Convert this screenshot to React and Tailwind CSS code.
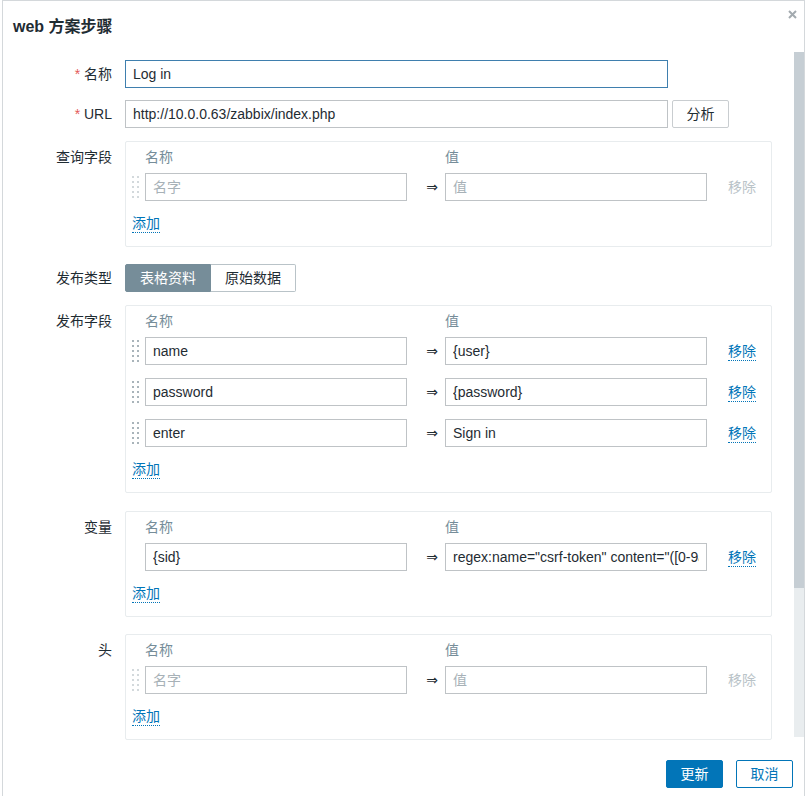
import React from "react";

function Handle({ light }) {
  const fill = light ? "#d3d9dc" : "#a9b4ba";
  const dots = [];
  for (let r = 0; r < 5; r++) {
    for (let c = 0; c < 2; c++) {
      dots.push(<rect key={r + "-" + c} x={c * 5} y={r * 5} width="2" height="2" fill={fill} />);
    }
  }
  return (
    <svg width="7" height="22" viewBox="0 0 7 22" className="shrink-0">
      {dots}
    </svg>
  );
}

function Field({ value, placeholder, focus }) {
  return (
    <input
      readOnly
      value={value || ""}
      placeholder={placeholder}
      className={
        "h-[28px] w-[262px] shrink-0 border bg-white px-[7px] text-[14px] text-[#1f2c33] outline-none placeholder:text-[#a7b1b7] " +
        (focus ? "border-[#3f7fae]" : "border-[#bfc3c6]")
      }
    />
  );
}

function PairRow({ name, value, namePh, valuePh, handle, light, removable }) {
  return (
    <div className="flex h-[28px] items-center">
      <div className="flex w-[13px] shrink-0 items-center">{handle ? <Handle light={light} /> : null}</div>
      <Field value={name} placeholder={namePh} />
      <div className="w-[38px] shrink-0 pr-[7px] text-right text-[14px] text-[#1f2c33] font-['DejaVu_Sans',sans-serif]">⇒</div>
      <Field value={value} placeholder={valuePh} />
      <span
        className={
          "ml-[21px] text-[14px] leading-[18px] " +
          (removable ? "border-b border-dotted border-[#0275b8] text-[#0275b8]" : "text-[#b9c3c8]")
        }
      >
        移除
      </span>
    </div>
  );
}

function PairBox({ rows }) {
  return (
    <div className="w-[647px] rounded-[2px] border border-[#e8ecee] pb-[12px] pl-[6px] pt-[4px]">
      <div className="flex h-[22px] items-center text-[14px] text-[#768d99]">
        <div className="ml-[13px] w-[262px]">名称</div>
        <div className="ml-[38px]">值</div>
      </div>
      <div className="mt-[5px] flex flex-col gap-[13px]">
        {rows.map((r, i) => (
          <PairRow key={i} {...r} />
        ))}
      </div>
      <div className="mt-[13px] flex h-[20px] items-center">
        <span className="border-b border-dotted border-[#0275b8] text-[14px] leading-[17px] text-[#0275b8]">添加</span>
      </div>
    </div>
  );
}

function Label({ children, req, box }) {
  return (
    <div
      className={
        "w-[110px] shrink-0 pr-[1px] text-right text-[14px] text-[#1f2c33] " +
        (box ? "pt-[5px] leading-[22px]" : "leading-[28px]")
      }
    >
      {req ? <span className="text-[#e45959]">* </span> : null}
      {children}
    </div>
  );
}

export default function App() {
  return (
    <div className="h-[796px] w-[807px] overflow-hidden bg-white font-['Liberation_Sans','Noto_Sans_CJK_SC',sans-serif]">
      <div className="ml-[2px] flex h-[796px] w-[803px] flex-col border-l border-r border-t border-[#d4d8db]">
        {/* header */}
        <div className="relative flex h-[51px] shrink-0 items-center pl-[10px]">
          <h1 className="text-[16px] font-bold text-[#1f2c33]">web 方案步骤</h1>
          <svg className="absolute right-[7px] top-[9px]" width="9" height="9" viewBox="0 0 9 9">
            <path d="M1 1L8 8M8 1L1 8" stroke="#a3aaaf" strokeWidth="2" />
          </svg>
        </div>

        {/* body */}
        <div className="flex h-[693px] shrink-0">
          <div className="flex-1 overflow-hidden">
            <div className="mt-[8px] flex">
              <Label req>名称</Label>
              <div className="ml-[12px]">
                <input
                  readOnly
                  value="Log in"
                  className="h-[28px] w-[543px] border border-[#3f7fae] bg-white px-[7px] text-[14px] text-[#1f2c33] outline-none"
                />
              </div>
            </div>

            <div className="mt-[12px] flex">
              <Label req>URL</Label>
              <div className="ml-[12px] flex gap-[4px]">
                <input
                  readOnly
                  value="http://10.0.0.63/zabbix/index.php"
                  className="h-[28px] w-[543px] border border-[#bfc3c6] bg-white px-[7px] text-[14px] text-[#1f2c33] outline-none"
                />
                <button className="h-[28px] w-[57px] rounded-[2px] border border-[#c9cdd0] bg-white text-[14px] text-[#1f2c33]">
                  分析
                </button>
              </div>
            </div>

            <div className="mt-[13px] flex">
              <Label box>查询字段</Label>
              <div className="ml-[12px]">
                <PairBox rows={[{ namePh: "名字", valuePh: "值", handle: true, light: true, removable: false }]} />
              </div>
            </div>

            <div className="mt-[17px] flex">
              <Label>发布类型</Label>
              <div className="ml-[12px] flex h-[28px]">
                <div className="flex w-[86px] items-center justify-center rounded-l-[2px] border border-[#768d99] bg-[#768d99] text-[14px] text-white">
                  表格资料
                </div>
                <div className="flex w-[85px] items-center justify-center rounded-r-[2px] border border-l-0 border-[#b9c3c8] bg-white text-[14px] text-[#1f2c33]">
                  原始数据
                </div>
              </div>
            </div>

            <div className="mt-[13px] flex">
              <Label box>发布字段</Label>
              <div className="ml-[12px]">
                <PairBox
                  rows={[
                    { name: "name", value: "{user}", handle: true, removable: true },
                    { name: "password", value: "{password}", handle: true, removable: true },
                    { name: "enter", value: "Sign in", handle: true, removable: true },
                  ]}
                />
              </div>
            </div>

            <div className="mt-[18px] flex">
              <Label box>变量</Label>
              <div className="ml-[12px]">
                <PairBox
                  rows={[
                    {
                      name: "{sid}",
                      value: 'regex:name="csrf-token" content="([0-9a-z]{16})"',
                      handle: false,
                      removable: true,
                    },
                  ]}
                />
              </div>
            </div>

            <div className="mt-[17px] flex">
              <Label box>头</Label>
              <div className="ml-[12px]">
                <PairBox rows={[{ namePh: "名字", valuePh: "值", handle: true, light: true, removable: false }]} />
              </div>
            </div>
          </div>

          {/* scrollbar */}
          <div className="w-[10px] shrink-0">
            <div className="flex h-[685px] flex-col bg-[#e9edef]">
              <div className="h-[536px] bg-[#c6ced4]" />
            </div>
          </div>
        </div>

        {/* footer */}
        <div className="flex flex-1 justify-end gap-[13px] pr-[11px] pt-[15px]">
          <button className="h-[28px] w-[57px] rounded-[2px] border border-[#0275b8] bg-[#0275b8] text-[14px] text-white">
            更新
          </button>
          <button className="h-[28px] w-[57px] rounded-[2px] border border-[#0275b8] bg-white text-[14px] text-[#0275b8]">
            取消
          </button>
        </div>
      </div>
    </div>
  );
}
